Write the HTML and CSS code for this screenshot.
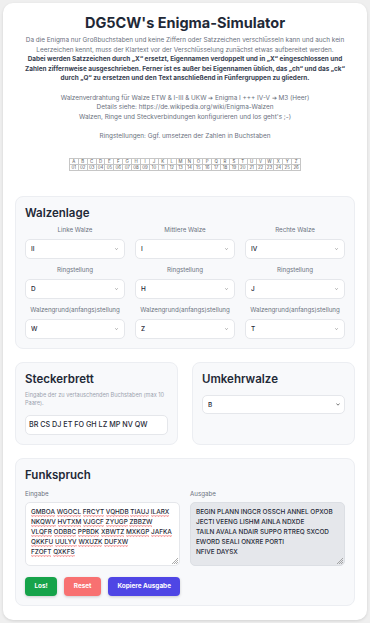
FILE: index.html
```html
<!DOCTYPE html>
<html lang="de">
<head>
<meta charset="utf-8">
<title>DG5CW's Enigma-Simulator</title>
<link rel="stylesheet" href="styles.css">
</head>
<body>
<main class="page">
  <h1 class="title">DG5CW's Enigma-Simulator</h1>
  <p class="intro">Da die Enigma nur Großbuchstaben und keine Ziffern oder Satzzeichen verschlüsseln kann und auch kein Leerzeichen kennt, muss der Klartext vor der Verschlüsselung zunächst etwas aufbereitet werden.<br><strong>Dabei werden Satzzeichen durch „X“ ersetzt, Eigennamen verdoppelt und in „X“ eingeschlossen und<br>Zahlen ziffernweise ausgeschrieben. Ferner ist es außer bei Eigennamen üblich, das „ch“ und das „ck“<br>durch „Q“ zu ersetzen und den Text anschließend in Fünfergruppen zu gliedern.</strong><br><br>Walzenverdrahtung für Walze ETW &amp; I-III &amp; UKW ➔ Enigma I +++ IV-V ➔ M3 (Heer)<br>Details siehe: https://de.wikipedia.org/wiki/Enigma-Walzen<br>Walzen, Ringe und Steckverbindungen konfigurieren und los geht's ;-)<br><br>Ringstellungen: Ggf. umsetzen der Zahlen in Buchstaben</p>

  <table class="alpha">
    <tr><td>A</td><td>B</td><td>C</td><td>D</td><td>E</td><td>F</td><td>G</td><td>H</td><td>I</td><td>J</td><td>K</td><td>L</td><td>M</td><td>N</td><td>O</td><td>P</td><td>Q</td><td>R</td><td>S</td><td>T</td><td>U</td><td>V</td><td>W</td><td>X</td><td>Y</td><td>Z</td></tr>
    <tr><td>01</td><td>02</td><td>03</td><td>04</td><td>05</td><td>06</td><td>07</td><td>08</td><td>09</td><td>10</td><td>11</td><td>12</td><td>13</td><td>14</td><td>15</td><td>16</td><td>17</td><td>18</td><td>19</td><td>20</td><td>21</td><td>22</td><td>23</td><td>24</td><td>25</td><td>26</td></tr>
  </table>

  <section class="card walzen">
    <h2 class="card-title">Walzenlage</h2>
    <div class="walzen-grid">
      <label class="field"><span class="field-label">Linke Walze</span>
        <select class="sel"><option>I</option><option selected>II</option><option>III</option><option>IV</option><option>V</option></select></label>
      <label class="field"><span class="field-label">Mittlere Walze</span>
        <select class="sel"><option selected>I</option><option>II</option><option>III</option><option>IV</option><option>V</option></select></label>
      <label class="field"><span class="field-label">Rechte Walze</span>
        <select class="sel"><option>I</option><option>II</option><option>III</option><option selected>IV</option><option>V</option></select></label>

      <label class="field"><span class="field-label">Ringstellung</span>
        <select class="sel"><option>D</option></select></label>
      <label class="field"><span class="field-label">Ringstellung</span>
        <select class="sel"><option>H</option></select></label>
      <label class="field"><span class="field-label">Ringstellung</span>
        <select class="sel"><option>J</option></select></label>

      <label class="field"><span class="field-label">Walzengrund(anfangs)stellung</span>
        <select class="sel"><option>W</option></select></label>
      <label class="field"><span class="field-label">Walzengrund(anfangs)stellung</span>
        <select class="sel"><option>Z</option></select></label>
      <label class="field"><span class="field-label">Walzengrund(anfangs)stellung</span>
        <select class="sel"><option>T</option></select></label>
    </div>
  </section>

  <div class="pair">
    <section class="card">
      <h2 class="card-title">Steckerbrett</h2>
      <p class="hint">Eingabe der zu vertauschenden Buchstaben (max 10 Paare).</p>
      <input class="text-input" type="text" value="BR CS DJ ET FO GH LZ MP NV QW">
    </section>
    <section class="card">
      <h2 class="card-title">Umkehrwalze</h2>
      <select class="sel sel-ukw"><option>B</option><option>C</option></select>
    </section>
  </div>

  <section class="card funk">
    <h2 class="card-title funk-title">Funkspruch</h2>
    <div class="io-grid">
      <div class="io">
        <span class="io-label">Eingabe</span>
        <div class="box box-in">
          <span class="sp">GMBOA</span> <span class="sp">WGOCL</span> <span class="sp">FRCYT</span> <span class="sp">VQHDB</span> <span class="sp">TIAUJ</span> <span class="sp">ILARX</span><br>
          <span class="sp">NKQWV</span> <span class="sp">HVTXM</span> <span class="sp">VJGCF</span> <span class="sp">ZYUGP</span> <span class="sp">ZBBZW</span><br>
          <span class="sp">VLQFR</span> <span class="sp">ODBBC</span> <span class="sp">PPBDK</span> <span class="sp">XBWTZ</span> <span class="sp">MXKGP</span> <span class="sp">JAFKA</span><br>
          <span class="sp">QKKFU</span> <span class="sp">UULYV</span> <span class="sp">WXUZK</span> <span class="sp">DUFXW</span><br>
          <span class="sp">FZOFT</span> <span class="sp">QXKFS</span>
          <svg class="grip" width="7" height="7" viewBox="0 0 7 7"><path d="M7 1L1 7M7 3L3 7M7 5L5 7" stroke="#888" stroke-width="0.7"/></svg>
        </div>
      </div>
      <div class="io">
        <span class="io-label">Ausgabe</span>
        <div class="box box-out">BEGIN PLANN INGCR OSSCH ANNEL OPXOB<br>JECTI VEENG LISHM AINLA NDXDE<br>TAILN AVALA NDAIR SUPPO RTREQ SXCOD<br>EWORD SEALI ONXRE PORTI<br>NFIVE DAYSX
          <svg class="grip" width="7" height="7" viewBox="0 0 7 7"><path d="M7 1L1 7M7 3L3 7M7 5L5 7" stroke="#888" stroke-width="0.7"/></svg>
        </div>
      </div>
    </div>
    <div class="actions">
      <button class="btn btn-go" type="button">Los!</button>
      <button class="btn btn-reset" type="button">Reset</button>
      <button class="btn btn-copy" type="button">Kopiere Ausgabe</button>
    </div>
  </section>
</main>
</body>
</html>
```

FILE: styles.css
```css
* { box-sizing: border-box; margin: 0; padding: 0; }

html, body { background: #efefef; }

body {
  padding: 3px;
  font-family: Inter, "Noto Sans", sans-serif;
  color: #1f2937;
}

.page {
  background: #ffffff;
  border-radius: 10px;
  box-shadow: 0 1px 3px rgba(0, 0, 0, 0.12);
  padding: 11px 12px 14px 12px;
}

.title {
  font-size: 14.5px;
  line-height: 18px;
  font-weight: 700;
  text-align: center;
  color: #1f2937;
}

.intro {
  margin-top: 4px;
  font-size: 6.4px;
  line-height: 9.6px;
  text-align: center;
  color: #6b7280;
}

.intro strong {
  color: #374151;
  font-weight: 700;
  white-space: nowrap;
}

.alpha {
  margin: 16px auto 0;
  border-collapse: collapse;
  font-size: 4.4px;
  line-height: 5px;
  color: #555;
}

.alpha td {
  border: 1px solid #c6c6c6;
  width: 8.9px;
  text-align: center;
  padding: 0;
}

.card {
  background: #f8f9fb;
  border: 1px solid #eceef2;
  border-radius: 8px;
  padding: 9px;
}

.walzen { margin-top: 25px; }

.card-title {
  font-size: 11.5px;
  line-height: 14px;
  font-weight: 600;
  color: #1f2937;
  margin-bottom: 5px;
}

.walzen-grid {
  display: grid;
  grid-template-columns: repeat(3, 1fr);
  column-gap: 10px;
  row-gap: 6px;
}

.field {
  display: flex;
  flex-direction: column;
}

.field-label {
  font-size: 6.2px;
  line-height: 10px;
  color: #6b7280;
  text-align: center;
  white-space: nowrap;
  margin-bottom: 4px;
}

.sel {
  appearance: none;
  -webkit-appearance: none;
  width: 100%;
  height: 20px;
  background: #fff url("data:image/svg+xml;utf8,<svg xmlns='http://www.w3.org/2000/svg' width='3' height='2' viewBox='0 0 3 2'><path d='M0.3 0.3L1.5 1.6L2.7 0.3' fill='none' stroke='%23777' stroke-width='0.6'/></svg>") no-repeat right 6px center;
  border: 1px solid #e5e7eb;
  border-radius: 5px;
  padding: 0 5px;
  font-family: Inter, "Noto Sans", sans-serif;
  font-size: 6.4px;
  font-weight: 500;
  color: #1f2937;
}

.sel-ukw {
  height: 19px;
  margin-top: 1px;
  background-image: url("data:image/svg+xml;utf8,<svg xmlns='http://www.w3.org/2000/svg' width='4' height='3' viewBox='0 0 4 3'><path d='M0.4 0.5L2 2.2L3.6 0.5' fill='none' stroke='%23555' stroke-width='0.8'/></svg>");
  background-position: right 4px center;
}

.pair {
  display: grid;
  grid-template-columns: 1fr 1fr;
  column-gap: 14px;
  margin-top: 13px;
}

.hint {
  font-size: 5.6px;
  line-height: 8px;
  color: #9ca3af;
  margin-bottom: 8px;
}

.text-input {
  display: block;
  width: 100%;
  height: 20px;
  background: #fff;
  border: 1px solid #e5e7eb;
  border-radius: 5px;
  padding: 0 3px;
  font-family: Inter, "Noto Sans", sans-serif;
  font-size: 7.2px;
  font-weight: 500;
  color: #1f2937;
}

.funk { margin-top: 13px; }

.funk-title { margin-bottom: 7px; }

.io-grid {
  display: grid;
  grid-template-columns: 1fr 1fr;
  column-gap: 10px;
}

.io {
  display: flex;
  flex-direction: column;
}

.io-label {
  font-size: 6.2px;
  line-height: 10px;
  color: #6b7280;
  margin-bottom: 3px;
}

.box {
  position: relative;
  height: 64px;
  border: 1px solid #e5e7eb;
  border-radius: 5px;
  padding: 4px 5px;
  font-size: 6.4px;
  line-height: 10px;
  font-weight: 500;
  color: #1f2937;
  white-space: nowrap;
}

.box-in { background: #fff; }

.box-out {
  background: #e5e7eb;
  border-color: #dcdfe4;
}

.sp {
  padding-bottom: 1px;
  background: url("data:image/svg+xml;utf8,<svg xmlns='http://www.w3.org/2000/svg' width='3' height='1.6' viewBox='0 0 3 1.6'><path d='M0 1.2L0.75 0.4L1.5 1.2L2.25 0.4L3 1.2' fill='none' stroke='%23ef4444' stroke-width='0.5'/></svg>") repeat-x left bottom;
}

.grip {
  position: absolute;
  right: 1px;
  bottom: 1px;
}

.actions {
  display: flex;
  gap: 7px;
  margin-top: 11px;
}

.btn {
  height: 19px;
  padding: 0 9.5px;
  border: none;
  border-radius: 4px;
  font-family: Inter, "Noto Sans", sans-serif;
  font-size: 6.4px;
  font-weight: 700;
  color: #fff;
  box-shadow: 0 1px 3px rgba(0, 0, 0, 0.18);
}

.btn-go { background: #16a34a; }
.btn-reset { background: #f87171; }
.btn-copy { background: #4f46e5; }
```
